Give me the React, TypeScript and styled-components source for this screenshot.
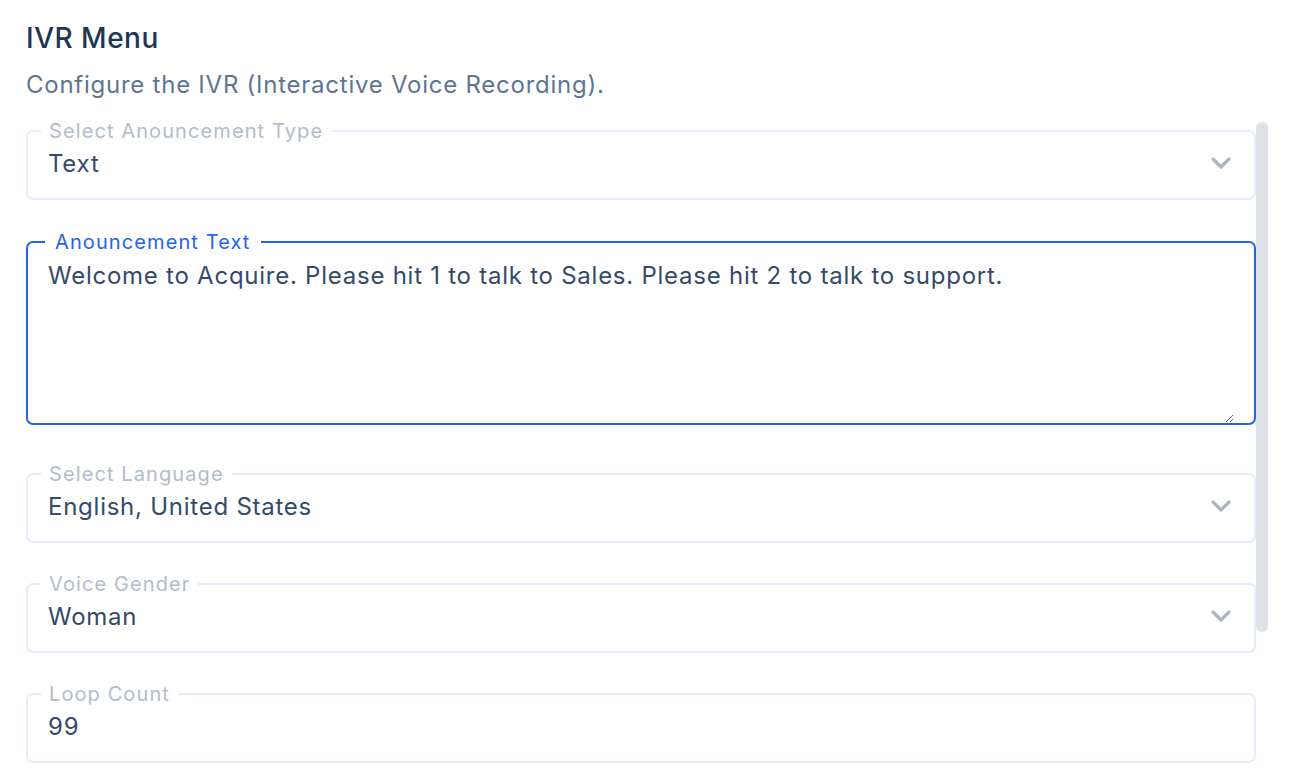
import { createGlobalStyle } from "styled-components";
import styled from "styled-components";

const GlobalStyle = createGlobalStyle`
  body {
    margin: 0;
    background: #fff;
    font-family: Inter, "Noto Sans", sans-serif;
    -webkit-font-smoothing: antialiased;
  }
`;

const Page = styled.div`
  padding: 22px 0 0 26px;
`;

const Title = styled.h2`
  margin: 0;
  font-size: 28px;
  font-weight: 500;
  letter-spacing: 0.5px;
  line-height: 32px;
  color: #1f3552;
`;

const Subtitle = styled.p`
  margin: 17px 0 0;
  font-size: 24px;
  letter-spacing: 0.75px;
  line-height: 28px;
  color: #5e7592;
`;

const Body = styled.div`
  display: flex;
  align-items: flex-start;
  margin-top: 22px;
`;

const Form = styled.div`
  width: 1230px;
  display: flex;
  flex-direction: column;
  gap: 31px;
`;

const Scrollbar = styled.div`
  width: 12px;
  height: 510px;
  margin-top: 1px;
  border-radius: 6px;
  background: #dee2e7;
`;

const Field = styled.fieldset<{ $focused?: boolean }>`
  margin: ${(p) => (p.$focused ? "1px 0 8px" : "0")};
  padding: 0 20px;
  border: 2px solid ${(p) => (p.$focused ? "#2563eb" : "#e5edfb")};
  border-radius: 7px;
  min-width: 0;
`;

const Legend = styled.legend<{ $focused?: boolean }>`
  padding: 0 ${(p) => (p.$focused ? "10px" : "8px")};
  margin-left: ${(p) => (p.$focused ? "-3px" : "-7px")};
  font-size: 20px;
  letter-spacing: 1.1px;
  line-height: 20px;
  color: ${(p) => (p.$focused ? "#2563eb" : "#b3bcc9")};
`;

const Value = styled.div`
  height: 57px;
  display: flex;
  align-items: center;
  justify-content: space-between;
  font-size: 24px;
  letter-spacing: 0.75px;
  color: #344a69;
  padding-bottom: 13px;
  box-sizing: border-box;
`;

const Area = styled.textarea`
  display: block;
  width: 100%;
  height: 171px;
  border: none;
  outline: none;
  resize: vertical;
  padding: 10px 0 0;
  margin: 0;
  font-family: inherit;
  font-size: 24px;
  letter-spacing: 0.75px;
  line-height: 28px;
  color: #344a69;
  background: transparent;
  box-sizing: border-box;
`;

const Chevron = () => (
  <svg width="22" height="14" viewBox="0 0 22 14" style={{ marginRight: 2 }}>
    <path d="M3 3l8 8 8-8" fill="none" stroke="#aab4c3" strokeWidth="3.2" strokeLinecap="round" strokeLinejoin="round" />
  </svg>
);

function SelectField({ label, value }: { label: string; value: string }) {
  return (
    <Field>
      <Legend>{label}</Legend>
      <Value>
        <span>{value}</span>
        <Chevron />
      </Value>
    </Field>
  );
}

export default function App() {
  return (
    <Page>
      <GlobalStyle />
      <Title>IVR Menu</Title>
      <Subtitle>Configure the IVR (Interactive Voice Recording).</Subtitle>
      <Body>
        <Form>
          <SelectField label="Select Anouncement Type" value="Text" />
          <Field $focused>
            <Legend $focused>Anouncement Text</Legend>
            <Area defaultValue="Welcome to Acquire. Please hit 1 to talk to Sales. Please hit 2 to talk to support." />
          </Field>
          <SelectField label="Select Language" value="English, United States" />
          <SelectField label="Voice Gender" value="Woman" />
          <Field>
            <Legend>Loop Count</Legend>
            <Value>
              <span>99</span>
            </Value>
          </Field>
        </Form>
        <Scrollbar />
      </Body>
    </Page>
  );
}
